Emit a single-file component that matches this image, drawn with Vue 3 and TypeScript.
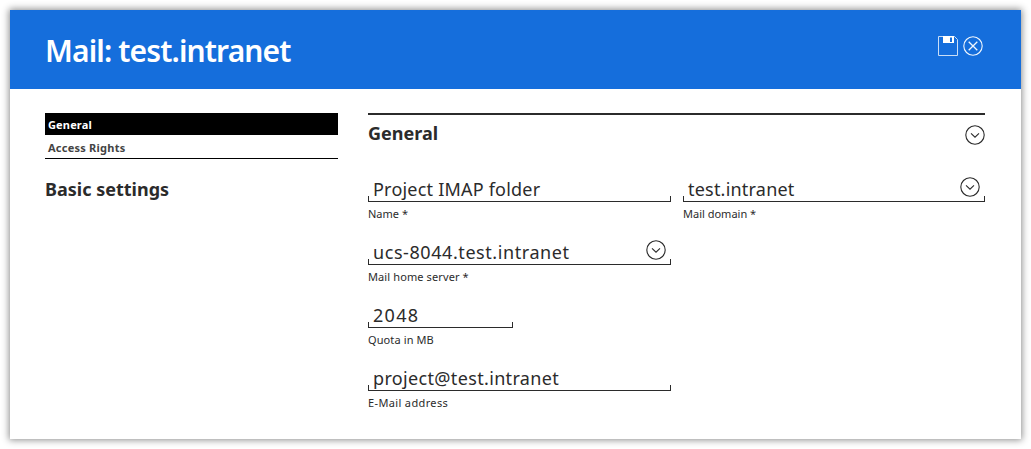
<script setup lang="ts">
interface Field {
  id: string
  value: string
  label: string
  select?: boolean
}

const tabs = ['General', 'Access Rights']
const fields: Field[] = [
  { id: 'name', value: 'Project IMAP folder', label: 'Name *' },
  { id: 'domain', value: 'test.intranet', label: 'Mail domain *', select: true },
  { id: 'server', value: 'ucs-8044.test.intranet', label: 'Mail home server *', select: true },
  { id: 'quota', value: '2048', label: 'Quota in MB' },
  { id: 'email', value: 'project@test.intranet', label: 'E-Mail address' },
]
</script>

<template>
  <main class="window">
    <header class="header">
      <h1 class="title">Mail: test.intranet</h1>
      <div class="actions">
        <svg class="save" width="20" height="20" viewBox="0 0 20 20" fill="none">
          <path d="M.5 .5H16.5L19.5 3.5V19.5H.5Z" stroke="#c9def7" />
          <path d="M5 0H16V7H5Z" fill="#fff" />
          <path d="M12 1.5H14V6H12Z" fill="#156edc" />
        </svg>
        <svg width="20" height="20" viewBox="0 0 20 20" fill="none" stroke="#f0f6fd">
          <circle cx="10" cy="10" r="9.2" stroke-width="1.1" />
          <path d="M5.7 5.7L14.3 14.3M14.3 5.7L5.7 14.3" stroke-width="1.3" />
        </svg>
      </div>
    </header>
    <div class="body">
      <aside class="sidebar">
        <nav class="tabs">
          <div v-for="(tab, i) in tabs" :key="tab" class="tab" :class="{ active: i === 0 }">{{ tab }}</div>
        </nav>
        <h2 class="side-heading">Basic settings</h2>
      </aside>
      <section class="content">
        <div class="section-head">
          <h2 class="section-heading">General</h2>
          <svg class="chevron" width="20" height="20" viewBox="0 0 20 20">
            <circle cx="10" cy="10" r="9.2" />
            <path d="M6 8.4L10 12.2L14 8.4" />
          </svg>
        </div>
        <div class="form">
          <div v-for="field in fields" :key="field.id" class="field" :class="field.id">
            <div class="control">
              <span class="value">{{ field.value }}</span>
              <svg v-if="field.select" class="chevron" width="20" height="20" viewBox="0 0 20 20">
                <circle cx="10" cy="10" r="9.2" />
                <path d="M6 8.4L10 12.2L14 8.4" />
              </svg>
            </div>
            <div class="label">{{ field.label }}</div>
          </div>
        </div>
      </section>
    </div>
  </main>
</template>

<style>
body {
  background: #fff;
}
</style>

<style scoped>
.window {
  box-sizing: border-box;
  width: 1011px;
  height: 429px;
  margin: 10px;
  background: #fff;
  box-shadow: 0 0 7px 1px rgba(0, 0, 0, 0.45);
  color: #2b2b2b;
  font-family: "Noto Sans", sans-serif;
}
.window * {
  box-sizing: border-box;
}
h1,
h2 {
  margin: 0;
}
.header {
  display: flex;
  justify-content: space-between;
  height: 79px;
  padding: 20px 38px 0 35px;
  background: #156edc;
}
.title {
  color: #fff;
  font-size: 30px;
  font-weight: 600;
  letter-spacing: -0.87px;
  line-height: 41px;
  white-space: nowrap;
}
.actions {
  display: flex;
  gap: 5px;
  padding-top: 6px;
}
svg {
  display: block;
  flex: none;
}
.body {
  display: flex;
  gap: 30px;
  padding: 24px 36px 0 35px;
}
.sidebar {
  width: 293px;
}
.tabs {
  border-bottom: 1px solid #000;
}
.tab {
  height: 23px;
  padding: 1px 3px 0;
  color: #444;
  font-size: 11px;
  font-weight: 700;
  letter-spacing: 0.24px;
  line-height: 23px;
}
.active {
  height: 22px;
  padding-top: 0;
  background: #000;
  color: #fff;
  letter-spacing: 0.15px;
}
.side-heading,
.section-heading {
  font-size: 18px;
  font-weight: 700;
  line-height: 24px;
  white-space: nowrap;
}
.side-heading {
  margin-top: 18px;
}
.content {
  width: 617px;
}
.section-head {
  display: flex;
  justify-content: space-between;
  height: 61px;
  padding-top: 6px;
  border-top: 2px solid #2b2b2b;
}
.section-head .chevron {
  margin-top: 4px;
}
.chevron {
  fill: none;
  stroke: #2b2b2b;
  stroke-width: 1.1;
}
.form {
  display: grid;
  grid-template-columns: 303px 302px;
  grid-auto-rows: 63px;
  column-gap: 12px;
}
.server,
.quota,
.email {
  grid-column: 1;
}
.quota {
  width: 145px;
}
.control {
  display: flex;
  justify-content: space-between;
  height: 28px;
  padding: 3px 5px 0;
  border-bottom: 1px solid #2b2b2b;
  background:
    linear-gradient(#2b2b2b, #2b2b2b) left bottom / 1px 5px no-repeat,
    linear-gradient(#2b2b2b, #2b2b2b) right bottom / 1px 5px no-repeat;
}
.value {
  font-size: 18px;
  letter-spacing: 0.21px;
  line-height: 24px;
  white-space: nowrap;
}
.label {
  padding-top: 4px;
  font-size: 11px;
  line-height: 16px;
}
.server .value {
  letter-spacing: 0.57px;
}
.server .label,
.quota .label {
  letter-spacing: 0.11px;
}
.quota .value {
  letter-spacing: 1.3px;
}
.email .value {
  letter-spacing: 0.34px;
}
.email .label {
  letter-spacing: 0.36px;
}
</style>
